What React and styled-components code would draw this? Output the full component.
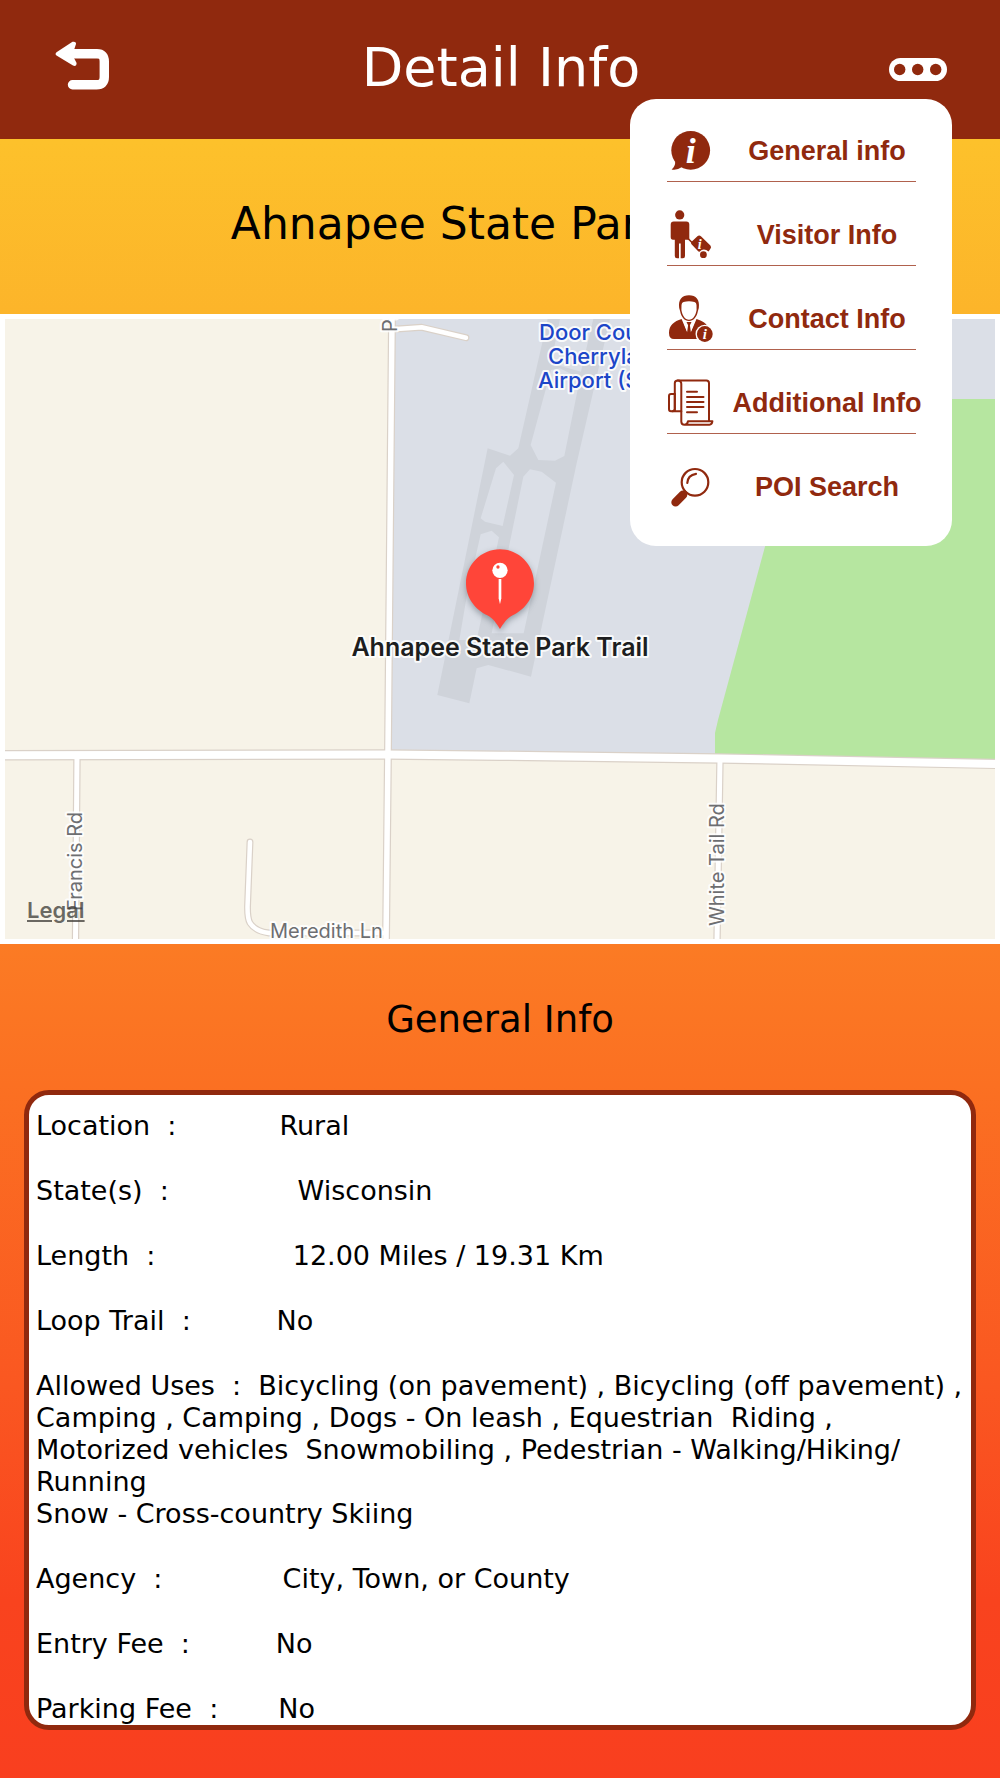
import React, { useState } from "react";
import styled, { createGlobalStyle } from "styled-components";

const GlobalStyle = createGlobalStyle`
  * {
    box-sizing: border-box;
  }
  body {
    margin: 0;
    font-family: Verdana, "DejaVu Sans", sans-serif;
    color: #000;
  }
  button {
    font: inherit;
    color: inherit;
    padding: 0;
    border: none;
    background: none;
    cursor: pointer;
  }
`;

const Page = styled.div`
  display: flex;
  flex-direction: column;
  height: 100vh;
  background: linear-gradient(#fec62b 0%, #fdc12b 8%, #fcb42a 18%, #fb7b24 53%, #fb7022 61%, #fa5721 78%, #f9431e 90%, #f93f1f 100%);
`;

const Header = styled.header`
  position: relative;
  z-index: 2;
  flex: none;
  display: flex;
  align-items: center;
  justify-content: space-between;
  height: 139px;
  padding: 0 53px 4px 55px;
  background-color: #90290e;
  color: #fff;

  h1 {
    margin: 0;
    font-size: 54px;
    font-weight: 400;
  }
`;

const IconButton = styled.button`
  display: flex;
  justify-content: ${(props) => (props.$end ? "flex-end" : "flex-start")};
  width: 58px;
`;

const Menu = styled.nav`
  position: absolute;
  top: 99px;
  right: 48px;
  width: 322px;
  padding: 0 26px 27px 37px;
  border-radius: 26px;
  background-color: #fff;
  color: #90290e;
`;

const MenuItem = styled.button`
  display: grid;
  grid-template-columns: 48px 200px;
  column-gap: 12px;
  align-items: center;
  height: 84px;
  padding-top: 20px;
  font-family: "Arial Rounded MT Bold", "Liberation Sans", sans-serif;
  font-size: 27px;
  font-weight: 700;
  text-align: center;
  white-space: nowrap;
`;

const Divider = styled.hr`
  height: 1px;
  margin: -2px 10px 1px 0;
  border: none;
  background-color: #b0614d;
`;

const Title = styled.h2`
  flex: none;
  display: flex;
  align-items: center;
  justify-content: center;
  height: 175px;
  margin: 0;
  padding-bottom: 6px;
  font-size: 44px;
  font-weight: 400;
`;

const MapFrame = styled.section`
  position: relative;
  flex: none;
  border: 5px solid #fff;

  svg {
    display: block;
    width: 100%;
    height: auto;
  }

  a {
    position: absolute;
    left: 22px;
    bottom: 17px;
    font-family: Inter, sans-serif;
    font-size: 22px;
    line-height: 24px;
    font-weight: 600;
    color: rgba(60, 58, 54, 0.75);
  }
`;

const MapLabel = styled.text`
  font-family: Inter, sans-serif;
  font-size: ${(props) => props.$size || 20}px;
  font-weight: ${(props) => props.$weight || 400};
  fill: ${(props) => props.$color || "#6d6e71"};
  stroke: #fff;
  stroke-width: 4px;
  stroke-opacity: 0.85;
  stroke-linejoin: round;
  paint-order: stroke;
`;

const IconLetter = styled.text`
  font-family: "Liberation Serif", serif;
  font-style: italic;
  font-weight: 700;
  font-size: ${(props) => props.$size}px;
  fill: #fff;
  text-anchor: middle;
`;

const SectionTitle = styled.h3`
  flex: none;
  display: flex;
  align-items: center;
  justify-content: center;
  height: 146px;
  margin: 0;
  padding-top: 4px;
  font-size: 37px;
  font-weight: 400;
`;

const InfoCard = styled.section`
  flex: 1;
  min-height: 0;
  margin: 0 24px 48px;
  padding: 15px 7px 0;
  overflow-y: auto;
  scrollbar-width: none;
  border: 5px solid #90290e;
  border-radius: 25px;
  background-color: #fff;
`;

const InfoList = styled.dl`
  display: flex;
  flex-direction: column;
  gap: 33px;
  margin: 0;
  font-size: 27px;
  line-height: 32px;
  white-space: pre-wrap;

  dt,
  dd {
    display: inline;
    margin: 0;
  }
`;

const BackIcon = () => (
  <svg width="56" height="54" viewBox="55 41 56 54" aria-hidden="true">
    <path
      d="M72 53.7H97Q104.3 53.7 104.3 61.5V77Q104.3 84.8 96.5 84.8H72.5"
      fill="none"
      stroke="#fff"
      strokeWidth="9.4"
      strokeLinecap="round"
    />
    <path d="M56.5 52.2L72.5 41.8Q76.3 41 76 44L74 50V58L76.6 63Q76.6 66.8 73 65.6L56.5 55.6Q54.6 54 56.5 52.2Z" fill="#fff" />
  </svg>
);

const MoreIcon = () => (
  <svg width="58" height="26" viewBox="0 0 58 26" aria-hidden="true">
    <rect y="3" width="58" height="23" rx="11.5" fill="#fff" />
    <g fill="#90290e">
      <circle cx="10.7" cy="14.5" r="5.7" />
      <circle cx="28.7" cy="14.5" r="5.7" />
      <circle cx="46.7" cy="14.5" r="5.7" />
    </g>
  </svg>
);

const MenuIcon = ({ children }) => (
  <svg width="48" height="50" viewBox="0 0 48 50" fill="currentColor" aria-hidden="true">
    {children}
  </svg>
);

const GeneralIcon = () => (
  <MenuIcon>
    <circle cx="23.7" cy="24.3" r="19.4" />
    <path d="M8.2 35.5Q8.5 40 4.6 43.4Q9.8 44.6 15 41Z" />
    <IconLetter x="23.7" y="36.5" $size={36}>i</IconLetter>
  </MenuIcon>
);

const VisitorIcon = () => (
  <MenuIcon>
    <circle cx="12.7" cy="4.9" r="4.6" />
    <path d="M6.7 11.5H19.3Q22.3 11.5 22.3 14.5V29.7H18V46Q18 48.3 16 48.3H13.7V33.5H12V48.3H10Q7.8 48.3 7.8 46V29.7H6Q3.7 29.7 3.7 27V14.5Q3.7 11.5 6.7 11.5Z" />
    <path d="M20.5 28L28 35.5" stroke="currentColor" strokeWidth="1.6" />
    <path d="M24.3 32L30.4 26.2Q32.4 24.8 34.2 26.6L43.4 35.4Q44.8 37 43.4 38.8L41.6 41.4Q36.3 37.4 32.6 41.8L31.4 41.6L24.5 34.2Q23.6 33 24.3 32Z" />
    <circle cx="36.4" cy="44.7" r="3.4" />
    <IconLetter x="32.8" y="38.5" $size={14}>i</IconLetter>
  </MenuIcon>
);

const ContactIcon = () => (
  <MenuIcon>
    <path d="M12.2 14C11 5.5 15 1.3 22 1.3S33 5.5 31.8 14L30.8 17.5C29.8 22.8 26.5 27 22 27S14.2 22.8 13.2 17.5Z" />
    <path d="M14.5 11Q14.6 8.3 16.5 8Q22 6.4 27.5 8Q29.4 8.3 29.5 11L29.6 16C28.6 21.8 26 25.7 22 25.7S15.4 21.8 14.4 16Z" fill="#fff" />
    <path d="M2 39C2 31 7 27.5 14.6 25L20.5 39L22 34L23.5 39L29.5 25C35 26.6 40.2 29.5 41.6 35V45H7Q2 45 2 39Z" />
    <path d="M15.2 24.5L20.4 38.5L21 29.5L18.2 26.7ZM28.8 24.5L23.6 38.5L23 29.5L25.8 26.7Z" fill="#fff" />
    <path d="M19.5 28H24.5L22.9 31.2L24 39H20L21.1 31.2Z" />
    <circle cx="37.8" cy="40" r="9.3" fill="#fff" />
    <circle cx="37.8" cy="40" r="7.9" />
    <IconLetter x="37.8" y="44.8" $size={15}>i</IconLetter>
  </MenuIcon>
);

const AdditionalIcon = () => (
  <MenuIcon>
    <g fill="none" stroke="currentColor" strokeWidth="2" strokeLinejoin="round" strokeLinecap="round">
      <path d="M14.3 33.2H4Q2 33.2 2 31V18Q2 16 4 16H7.8" />
      <path d="M7.8 33V5.2Q7.8 2.5 10.8 2.5H39.4Q42 2.5 42 5.2V42.8" />
      <path d="M10.8 2.5Q14.3 2.5 14.3 6V43.5Q14.3 46.7 17.5 46.7H42.5Q45 46.7 45.4 43.2H21Q20.5 46.7 17.5 46.7" />
      <path d="M7.8 16V31Q7.5 33.2 5.5 33.2" />
      <path d="M20 13.8H30M20 18.9H36.5M20 24H36.5M20 29.1H36.5M20 34.2H30" />
    </g>
  </MenuIcon>
);

const SearchIcon = () => (
  <MenuIcon>
    <g fill="none" stroke="currentColor" strokeLinecap="round">
      <circle cx="28" cy="20.3" r="13.3" strokeWidth="2.2" />
      <path d="M20.3 21Q20.8 13 29 11.8" strokeWidth="2.2" />
      <path d="M16 32.8L8.6 40.2" strokeWidth="8.6" />
      <path d="M19.5 29.5L15 34" strokeWidth="5" strokeLinecap="butt" />
    </g>
  </MenuIcon>
);

const roads = [
  { d: "M387 0L383 431L381 622", width: 5.5 },
  { d: "M392 10L416.7 8.3L461 18.7", width: 4.5 },
  { d: "M72 436L70.5 622", width: 5 },
  { d: "M715 440L712 622", width: 5 },
  { d: "M245 523L242.5 588Q242.5 600 245 604Q250 612 264 614H381", width: 4.5 },
  { d: "M-5 436.2L381 435.5L495 436.7L715 439.5L995 445", width: 8 },
];

const TrailMap = () => (
  <svg viewBox="0 0 990 620" role="img" aria-label="Map of Ahnapee State Park Trail">
    <rect width="990" height="620" fill="#f7f3e8" />
    <path d="M387 0H990V445L383 436Z" fill="#dbdfe7" />
    <path d="M800 80H990V445L710 440V414L713 401Z" fill="#b6e6a0" />

    {/* airport runways */}
    <g transform="translate(355 -19) scale(0.3333)">
      <path
        fill="#cfd3da"
        fillRule="evenodd"
        d="M563 57H750L650 490L513 1130L385 1095L350 1105L328 1210L232 1185L383 445L450 467L475 445Z
          M600 57L573 190L663 215L700 57Z
          M573 210L512 435L535 480L585 482L613 468L660 235L600 205Z
          M510 508L490 530L445 750L395 1000H491L588 548L545 515Z
          M430 485L408 505L362 655L375 665L428 678L462 525Z
          M395 692L362 703L320 890L298 1020H350L417 712Z"
      />
    </g>

    <g fill="none" strokeLinecap="round" strokeLinejoin="round">
      {roads.map((road) => (
        <path key={road.d} d={road.d} stroke="#dad1c8" strokeWidth={road.width + 2.4} />
      ))}
      {roads.map((road) => (
        <path key={road.d} d={road.d} stroke="#fff" strokeWidth={road.width} />
      ))}
    </g>

    <MapLabel transform="translate(392 13) rotate(-90)">P.</MapLabel>
    <MapLabel transform="translate(77 592) rotate(-90)">Francis Rd</MapLabel>
    <MapLabel transform="translate(719 607) rotate(-90)">White Tail Rd</MapLabel>
    <MapLabel x="265" y="619">Meredith Ln</MapLabel>

    <MapLabel x="534" y="21" $size={22} $weight={500} $color="#1c46c8">Door County</MapLabel>
    <MapLabel x="543" y="45" $size={22} $weight={500} $color="#1c46c8">Cherryland</MapLabel>
    <MapLabel x="533" y="69" $size={22} $weight={500} $color="#1c46c8">Airport (SUE)</MapLabel>

    <g transform="translate(355 -19) scale(0.3333)">
      <path
        d="M420 748C476 748 522 794 522 850C522 895 493 930 458 946C440 955 430 972 420 987C410 972 400 955 382 946C347 930 318 895 318 850C318 794 364 748 420 748Z"
        fill="#ff4539"
        style={{ filter: "drop-shadow(0 8px 10px rgba(60, 70, 80, 0.45))" }}
      />
      <circle cx="420" cy="811" r="23" fill="#fff" />
      <circle cx="414" cy="801" r="5" fill="#ff4539" />
      <path d="M416 837H424V895L420 913L416 895Z" fill="#fff" />
    </g>
    <MapLabel x="495" y="337" textAnchor="middle" $size={25} $weight={600} $color="#1d1e20">
      Ahnapee State Park Trail
    </MapLabel>
  </svg>
);

const menuItems = [
  { label: "General info", icon: GeneralIcon },
  { label: "Visitor Info", icon: VisitorIcon },
  { label: "Contact Info", icon: ContactIcon },
  { label: "Additional Info", icon: AdditionalIcon },
  { label: "POI Search", icon: SearchIcon },
];

// the number of spaces in front of a value sets where it starts
const details = [
  { label: "Location  :", pad: 12, value: "Rural" },
  { label: "State(s)  :", pad: 15, value: "Wisconsin" },
  { label: "Length  :", pad: 16, value: "12.00 Miles / 19.31 Km" },
  { label: "Loop Trail  :", pad: 10, value: "No" },
  {
    label: "Allowed Uses  :",
    pad: 2,
    // zero-width spaces let the activity list break after a slash
    value:
      "Bicycling (on pavement) , Bicycling (off pavement) , Camping , Camping , Dogs - On leash , Equestrian  Riding , Motorized vehicles  Snowmobiling , Pedestrian - Walking/\u200bHiking/\u200bRunning\nSnow - Cross-country Skiing",
  },
  { label: "Agency  :", pad: 14, value: "City, Town, or County" },
  { label: "Entry Fee  :", pad: 10, value: "No" },
  { label: "Parking Fee  :", pad: 7, value: "No" },
];

function App() {
  const [menuOpen, setMenuOpen] = useState(true);

  return (
    <Page>
      <GlobalStyle />
      <Header>
        <IconButton aria-label="Back">
          <BackIcon />
        </IconButton>
        <h1>Detail Info</h1>
        <IconButton $end aria-label="More" aria-expanded={menuOpen} onClick={() => setMenuOpen(!menuOpen)}>
          <MoreIcon />
        </IconButton>
        {menuOpen && (
          <Menu>
            {menuItems.map(({ label, icon: Icon }, index) => (
              <React.Fragment key={label}>
                {index > 0 && <Divider />}
                <MenuItem>
                  <Icon />
                  <span>{label}</span>
                </MenuItem>
              </React.Fragment>
            ))}
          </Menu>
        )}
      </Header>

      <Title>Ahnapee State Park Trail</Title>

      <MapFrame>
        <TrailMap />
        <a href="#legal">Legal</a>
      </MapFrame>

      <SectionTitle>General Info</SectionTitle>

      <InfoCard>
        <InfoList>
          {details.map(({ label, pad, value }) => (
            <div key={label}>
              <dt>{label + " ".repeat(pad)}</dt>
              <dd>{value}</dd>
            </div>
          ))}
        </InfoList>
      </InfoCard>
    </Page>
  );
}

export default App;
